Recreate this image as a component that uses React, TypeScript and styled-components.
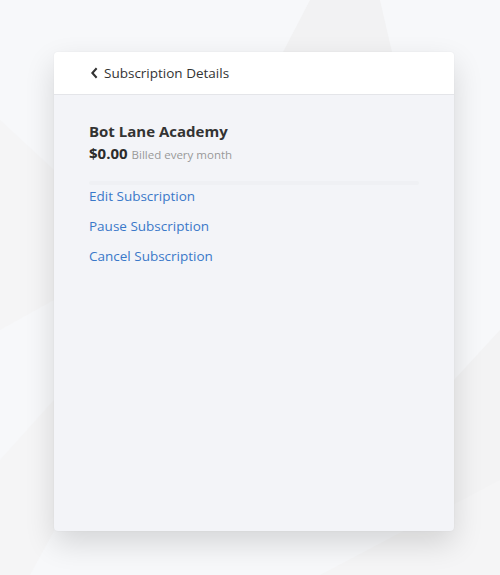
import React from 'react';
import styled, { createGlobalStyle } from 'styled-components';

const GlobalStyle = createGlobalStyle`
  html, body {
    margin: 0;
    padding: 0;
    background: #f7f8fa;
    font-family: 'Open Sans', 'Liberation Sans', sans-serif;
  }
`;

const links = ['Edit Subscription', 'Pause Subscription', 'Cancel Subscription'];

const Backdrop = () => (
  <BackdropSvg viewBox="0 0 500 575" preserveAspectRatio="none">
    <polygon points="310,0 380,0 392,52 283,52" fill="#f2f2f3" />
    <polygon points="0,120 54,170 54,300 0,330" fill="#f5f5f6" />
    <polygon points="0,575 0,460 54,400 54,531 30,575" fill="#f5f5f6" />
    <polygon points="454,380 500,330 500,575 454,575" fill="#f3f3f4" />
    <polygon points="320,575 500,480 500,575" fill="#f5f5f6" />
  </BackdropSvg>
);

const App: React.FC = () => {
  return (
    <>
      <GlobalStyle />
      <Page>
        <Backdrop />
        <Card>
          <Header>
            <BackButton>
              <Chevron viewBox="0 0 10 14">
                <path d="M7.5 1.5 L2.5 7 L7.5 12.5" fill="none" stroke="#333" strokeWidth="2.4" />
              </Chevron>
              Subscription Details
            </BackButton>
          </Header>
          <Body>
            <Title>Bot Lane Academy</Title>
            <PriceRow>
              <Price>$0.00</Price>
              <Billing>Billed every month</Billing>
            </PriceRow>
            <Divider />
            <LinkList>
              {links.map((label) => (
                <ActionLink key={label} href="#">
                  {label}
                </ActionLink>
              ))}
            </LinkList>
          </Body>
        </Card>
      </Page>
    </>
  );
};

export default App;

const Page = styled.div`
  position: relative;
  width: 500px;
  height: 575px;
  overflow: hidden;
  padding-top: 52px;
  box-sizing: border-box;
`;

const BackdropSvg = styled.svg`
  position: absolute;
  top: 0;
  left: 0;
  width: 500px;
  height: 575px;
`;

const Card = styled.div`
  position: relative;
  width: 400px;
  height: 479px;
  margin-left: 54px;
  background: #f3f4f8;
  border-radius: 4px;
  box-shadow: 0 12px 30px rgba(0, 0, 0, 0.14), 0 0 2px rgba(0, 0, 0, 0.06);
  overflow: hidden;
`;

const Header = styled.div`
  height: 42px;
  background: #ffffff;
  border-bottom: 1px solid #e4e5e9;
  display: flex;
  align-items: center;
  padding-left: 36px;
`;

const BackButton = styled.div`
  display: flex;
  align-items: center;
  gap: 5px;
  font-size: 13.5px;
  color: #333;
  cursor: pointer;
`;

const Chevron = styled.svg`
  width: 9px;
  height: 12px;
`;

const Body = styled.div`
  padding: 25px 35px 0 35px;
`;

const Title = styled.div`
  font-size: 15px;
  font-weight: 700;
  color: #333;
  line-height: 22px;
`;

const PriceRow = styled.div`
  display: flex;
  align-items: baseline;
  gap: 4px;
  line-height: 22px;
`;

const Price = styled.span`
  font-size: 15px;
  font-weight: 700;
  color: #2c2c2c;
`;

const Billing = styled.span`
  font-size: 11.5px;
  color: #999;
`;

const Divider = styled.div`
  height: 4px;
  margin-top: 15px;
  width: 330px;
  background: #eff0f4;
  border-radius: 2px;
`;

const LinkList = styled.div`
  display: flex;
  flex-direction: column;
  gap: 10px;
  margin-top: 1px;
`;

const ActionLink = styled.a`
  font-size: 13.5px;
  line-height: 20px;
  color: #3a78c9;
  text-decoration: none;
`;
